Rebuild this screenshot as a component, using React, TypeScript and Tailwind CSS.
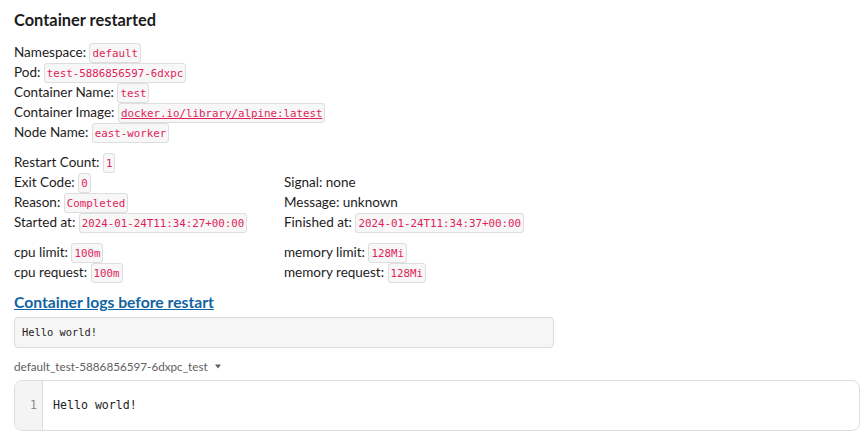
import React from 'react';

const Code = ({ children, link = false }: { children: React.ReactNode; link?: boolean }) => (
  <code
    className={`font-['DejaVu_Sans_Mono',monospace] text-[10.8px] leading-[12px] text-[#e01e5a] bg-[#f7f7f7] border border-[#dedede] rounded-[3px] px-[2px] pt-[3px] pb-[2px] ${link ? 'underline' : ''}`}
  >
    {children}
  </code>
);

const Field = ({ label, value }: { label: string; value?: React.ReactNode }) => (
  <div className="h-[20px] leading-[20px] whitespace-nowrap">
    {label}: {value}
  </div>
);

const Caret = () => (
  <svg width="8" height="8" viewBox="0 0 8 8" className="inline-block ml-[6px] mb-[1px]" fill="#616061">
    <path d="M1 2.5h6L4 6.5z" />
  </svg>
);

export default function App() {
  return (
    <div className="min-h-[438px] bg-white px-[14px] pt-2 text-[13.5px] text-[#1d1c1d] font-['Lato',sans-serif]">
      <h1 className="text-[16.4px] font-bold leading-[24px]">Container restarted</h1>

      <div className="mt-[10px]">
        <Field label="Namespace" value={<Code>default</Code>} />
        <Field label="Pod" value={<Code>test-5886856597-6dxpc</Code>} />
        <Field label="Container Name" value={<Code>test</Code>} />
        <Field label="Container Image" value={<Code link>docker.io/library/alpine:latest</Code>} />
        <Field label="Node Name" value={<Code>east-worker</Code>} />
      </div>

      <div className="mt-[10px] grid grid-cols-[270px_270px]">
        <Field label="Restart Count" value={<Code>1</Code>} />
        <div />
        <Field label="Exit Code" value={<Code>0</Code>} />
        <Field label="Signal" value="none" />
        <Field label="Reason" value={<Code>Completed</Code>} />
        <Field label="Message" value="unknown" />
        <Field label="Started at" value={<Code>2024-01-24T11:34:27+00:00</Code>} />
        <Field label="Finished at" value={<Code>2024-01-24T11:34:37+00:00</Code>} />
      </div>

      <div className="mt-[10px] grid grid-cols-[270px_270px]">
        <Field label="cpu limit" value={<Code>100m</Code>} />
        <Field label="memory limit" value={<Code>128Mi</Code>} />
        <Field label="cpu request" value={<Code>100m</Code>} />
        <Field label="memory request" value={<Code>128Mi</Code>} />
      </div>

      <div className="mt-[10px] h-[20px] leading-[20px]">
        <a href="#" className="text-[15.7px] font-bold text-[#1264a3] underline">
          Container logs before restart
        </a>
      </div>

      <pre className="mt-[5px] w-[540px] h-[31px] bg-[#f6f6f6] border border-[#dcdcdc] rounded-[4px] px-[7px] flex items-center font-['DejaVu_Sans_Mono',monospace] text-[10.4px] text-[#1d1c1d]">
        Hello world!
      </pre>

      <div className="mt-[10px] h-[16px] text-[11.7px] leading-[16px] text-[#616061] flex items-center">
        default_test-5886856597-6dxpc_test
        <Caret />
      </div>

      <div className="mt-[6px] h-[51px] w-[846px] flex border border-[#dddddd] rounded-[8px] overflow-hidden">
        <div className="w-[28px] bg-[#f4f4f4] border-r border-[#dddddd] flex items-center justify-end pr-[5px] font-['DejaVu_Sans_Mono',monospace] text-[11.5px] text-[#8a8a8a]">
          1
        </div>
        <div className="flex items-center pl-[10px] font-['DejaVu_Sans_Mono',monospace] text-[11.6px] text-[#1d1c1d]">
          Hello world!
        </div>
      </div>
    </div>
  );
}
